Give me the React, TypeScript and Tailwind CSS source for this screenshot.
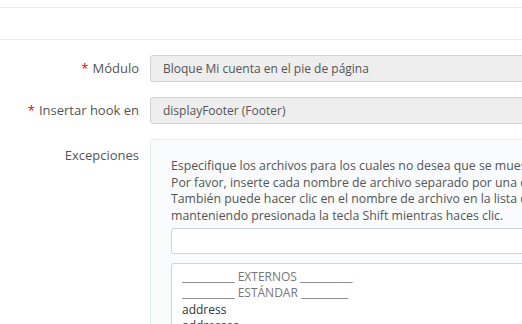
const FONT = "font-['Open_Sans',sans-serif]";

function Label({ text, required }: { text: string; required?: boolean }) {
  return (
    <div className="w-[139px] shrink-0 text-right text-[13px] text-[#555]">
      {required && <span className="mr-[4px] text-[#e00]">*</span>}
      {text}
    </div>
  );
}

export default function App() {
  return (
    <div className={`${FONT} h-[324px] w-[522px] overflow-hidden bg-white text-[#555]`}>
      <div className="h-[8px] border-b border-[#eaeaea]" />
      <div className="h-[32px] border-b border-[#eaeaea]" />

      <div className="flex flex-col pt-[15px]">
        <div className="flex items-center gap-[11px]">
          <Label text="Módulo" required />
          <div className="flex h-[27px] w-[600px] shrink-0 items-center rounded-[3px] border border-[#d3d3d3] bg-[#eeeeee] px-[12px] text-[12px] text-[#555]">
            Bloque Mi cuenta en el pie de página
          </div>
        </div>

        <div className="mt-[15px] flex items-center gap-[11px]">
          <Label text="Insertar hook en" required />
          <div className="flex h-[27px] w-[600px] shrink-0 items-center rounded-[3px] border border-[#d3d3d3] bg-[#eeeeee] px-[12px] text-[12px] text-[#555]">
            displayFooter (Footer)
          </div>
        </div>

        <div className="mt-[15px] flex items-start gap-[11px]">
          <div className="pt-[7px]">
            <Label text="Excepciones" />
          </div>
          <div className="w-[600px] shrink-0 rounded-[3px] border border-[#e6edf0] bg-[#f9fbfc] pl-[20px] pt-[18px]">
            <p className="whitespace-nowrap text-[12.3px] leading-[16.7px] text-[#555]">
              Especifique los archivos para los cuales no desea que se muestre el módulo.
              <br />
              Por favor, inserte cada nombre de archivo separado por una coma (",").
              <br />
              También puede hacer clic en el nombre de archivo en la lista de abajo, e incluso hacer una selección múltiple
              <br />
              manteniendo presionada la tecla Shift mientras haces clic.
            </p>
            <div className="mt-[3px] h-[26px] w-[500px] rounded-[3px] border border-[#c7d6db] bg-white" />
            <div className="mt-[9px] h-[120px] w-[500px] rounded-[3px] border border-[#c7d6db] bg-white px-[10px] pt-[5px] text-[12px] leading-[16.5px]">
              <div className="text-[#777]">__________ EXTERNOS __________</div>
              <div className="text-[#777]">__________ ESTÁNDAR _________</div>
              <div className="text-[#333]">address</div>
              <div className="text-[#333]">addresses</div>
            </div>
          </div>
        </div>
      </div>
    </div>
  );
}
